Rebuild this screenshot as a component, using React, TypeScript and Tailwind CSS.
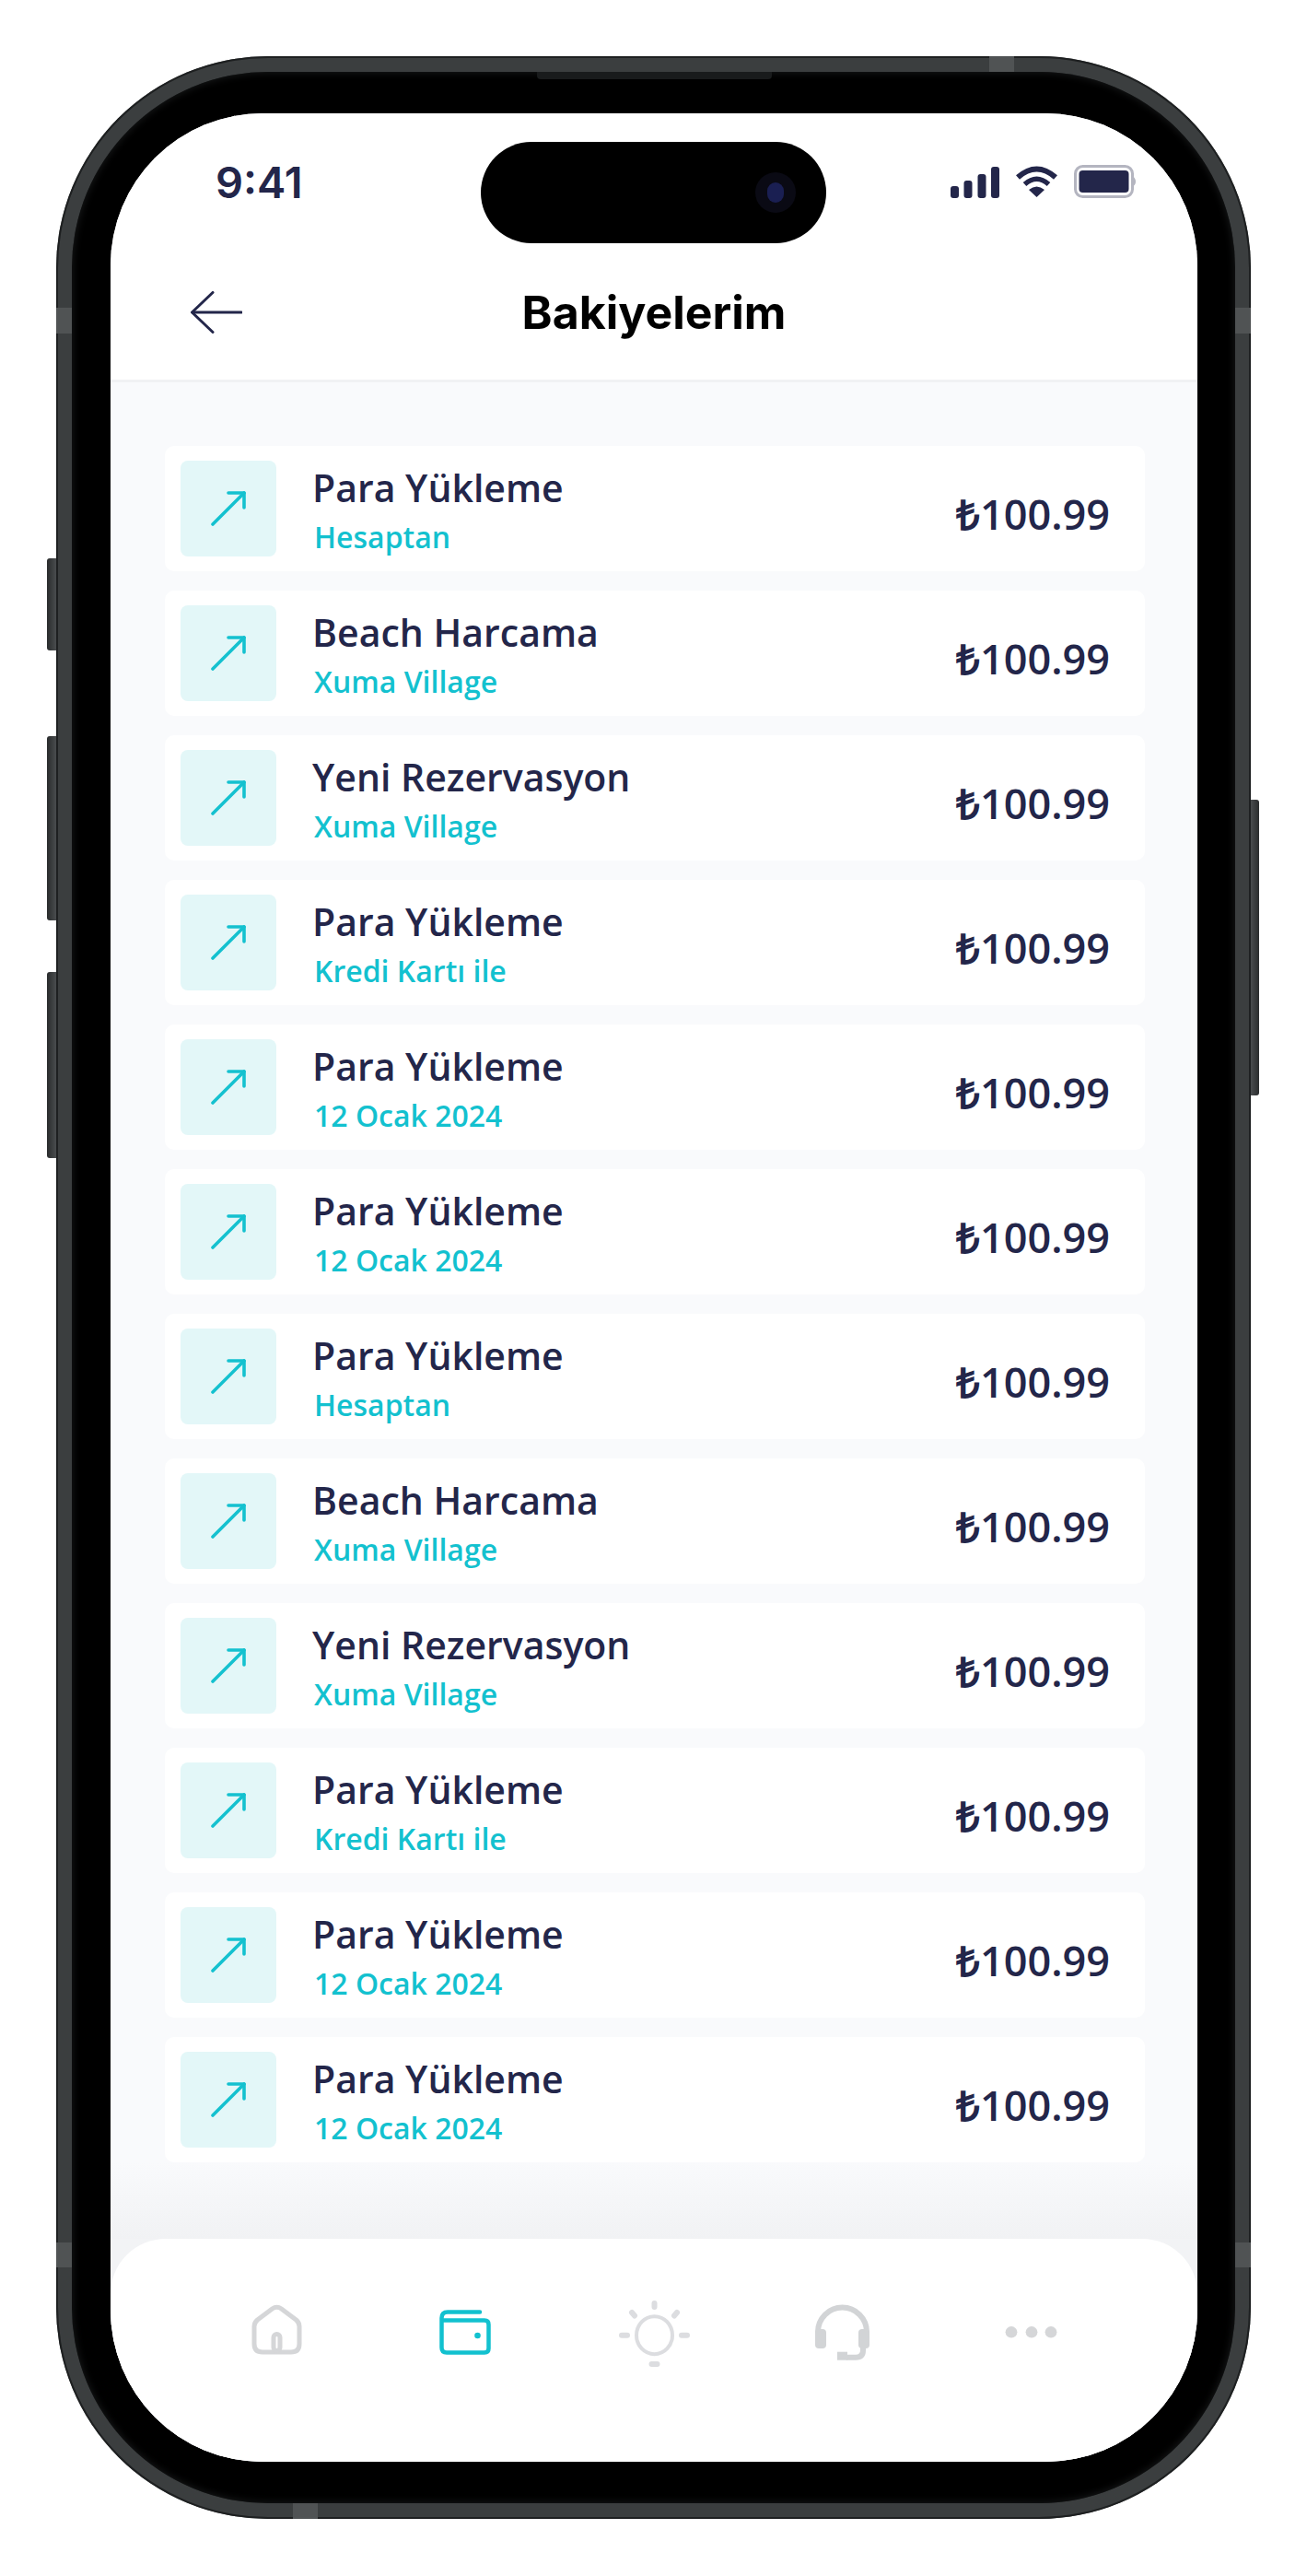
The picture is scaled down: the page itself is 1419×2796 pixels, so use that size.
const rows = [
  { title: "Para Yükleme", sub: "Hesaptan" },
  { title: "Beach Harcama", sub: "Xuma Village" },
  { title: "Yeni Rezervasyon", sub: "Xuma Village" },
  { title: "Para Yükleme", sub: "Kredi Kartı ile" },
  { title: "Para Yükleme", sub: "12 Ocak 2024" },
  { title: "Para Yükleme", sub: "12 Ocak 2024" },
  { title: "Para Yükleme", sub: "Hesaptan" },
  { title: "Beach Harcama", sub: "Xuma Village" },
  { title: "Yeni Rezervasyon", sub: "Xuma Village" },
  { title: "Para Yükleme", sub: "Kredi Kartı ile" },
  { title: "Para Yükleme", sub: "12 Ocak 2024" },
  { title: "Para Yükleme", sub: "12 Ocak 2024" },
];

function StatusIcons() {
  return (
    <div className="flex items-center gap-[17px]">
      <svg width="53" height="35" viewBox="0 0 53 35" fill="#23264a">
        <rect x="0" y="22" width="9" height="13" rx="3" />
        <rect x="14.5" y="16" width="9" height="19" rx="3" />
        <rect x="29.5" y="9" width="9" height="26" rx="3" />
        <rect x="44" y="1" width="9" height="34" rx="3" />
      </svg>
      <svg width="47" height="35" viewBox="0 0 47 35" fill="none" stroke="#23264a">
        <path d="M3 12.5Q23.5 -5.5 44 12.5" strokeWidth="6" />
        <path d="M10.5 20Q23.5 8.5 36.5 20" strokeWidth="5.5" />
        <path d="M23.5 34L15 26Q23.5 19 32 26Z" fill="#23264a" stroke="none" />
      </svg>
      <svg width="67" height="36" viewBox="0 0 67 36" fill="none">
        <rect x="1.5" y="1.5" width="62" height="33" rx="8" stroke="#b4b5c0" strokeWidth="3" />
        <rect x="5.5" y="6" width="54" height="24" rx="4" fill="#23264a" />
        <path d="M63 12Q67 14 67 18T63 24Z" fill="#b4b5c0" />
      </svg>
    </div>
  );
}

function BackArrow() {
  return (
    <svg width="56" height="46" viewBox="0 0 56 46" fill="none" stroke="#23264a" strokeWidth="3" strokeLinecap="round" strokeLinejoin="round">
      <path d="M55 23H2" />
      <path d="M24 1.5L1.5 23L24 44.5" />
    </svg>
  );
}

function UpArrow() {
  return (
    <svg width="104" height="104" viewBox="0 0 104 104" fill="none" stroke="#14c1cf" strokeWidth="3.6" strokeLinecap="round" strokeLinejoin="round">
      <path d="M35 69L69 35" />
      <path d="M52 35H69V51" />
    </svg>
  );
}

function HomeIcon() {
  return (
    <svg width="84" height="84" viewBox="0 0 84 84" fill="none" stroke="#d5d6d8" strokeWidth="5" strokeLinejoin="round">
      <path d="M37.5 12L21.5 24Q18 27 18 31V50Q18 59 27 59H58Q67 59 67 50V31Q67 27 63.5 24L47.5 12Q42.5 8.5 37.5 12Z" />
      <rect x="39" y="39.5" width="7" height="18" rx="3.5" />
    </svg>
  );
}

function WalletIcon() {
  return (
    <svg width="84" height="84" viewBox="0 0 84 84" fill="none" stroke="#12c1cf" strokeWidth="4.5" strokeLinecap="round">
      <path d="M58 15.5H23Q16.5 15.5 16.5 22V54Q16.5 59.5 22 59.5H63Q67.5 59.5 67.5 55V29Q67.5 24.5 63 24.5H16.5" />
      <circle cx="55.5" cy="41" r="3.3" fill="#12c1cf" stroke="none" />
    </svg>
  );
}

function SunIcon() {
  return (
    <svg width="84" height="84" viewBox="0 0 84 84" fill="none" stroke="#dcdde0" strokeLinecap="round">
      <ellipse cx="42.5" cy="40.7" rx="19.5" ry="20.5" strokeWidth="4" />
      <path d="M42.5 6V10M18 16L21 19.5M67 16L64 19.5M7 40.7H13M72 40.7H78M39.5 72H45.5" strokeWidth="6" />
    </svg>
  );
}

function HeadsetIcon() {
  return (
    <svg width="84" height="84" viewBox="0 0 84 84" fill="none" stroke="#d2d4d6" strokeWidth="6">
      <path d="M15 38V37a26.5 26.5 0 0 1 53 0V38" />
      <path d="M64 52V57Q64 64.7 56 64.7H46" />
      <rect x="12" y="34" width="12" height="21" rx="4" fill="#d2d4d6" stroke="none" />
      <rect x="59" y="34" width="12" height="21" rx="4" fill="#d2d4d6" stroke="none" />
      <rect x="36" y="58.7" width="11" height="9" fill="#d2d4d6" stroke="none" />
    </svg>
  );
}

function DotsIcon() {
  return (
    <svg width="84" height="84" viewBox="0 0 84 84" fill="#d5d6d8">
      <ellipse cx="20" cy="37.3" rx="6.4" ry="6.2" />
      <ellipse cx="42" cy="37.3" rx="6.4" ry="6.2" />
      <ellipse cx="63" cy="37.3" rx="6.4" ry="6.2" />
    </svg>
  );
}

export default function App() {
  return (
    <div className="w-[1419px] h-[2796px] bg-white flex justify-center pt-[61px] font-['Open_Sans',sans-serif]">
      <div className="relative w-[1297px] h-[2673px]">
        {/* side buttons */}
        <div className="absolute left-[-10px] top-[545px] w-[11px] h-[100px] rounded-l-[3px] bg-gradient-to-r from-[#2a2c2d] to-[#4d5052]" />
        <div className="absolute left-[-10px] top-[738px] w-[11px] h-[200px] rounded-l-[3px] bg-gradient-to-r from-[#2a2c2d] to-[#4d5052]" />
        <div className="absolute left-[-10px] top-[994px] w-[11px] h-[202px] rounded-l-[3px] bg-gradient-to-r from-[#2a2c2d] to-[#4d5052]" />
        <div className="absolute right-[-9px] top-[807px] w-[10px] h-[321px] rounded-r-[3px] bg-gradient-to-l from-[#2a2c2d] to-[#4d5052]" />

        <div className="relative h-full rounded-[230px] bg-[#3b3e3f] p-[17px] shadow-[inset_0_0_0_2px_#1e2021]">
          {/* antenna bands */}
          <div className="absolute left-0 top-[273px] w-[17px] h-[28px] bg-[#505354]" />
          <div className="absolute right-0 top-[273px] w-[17px] h-[28px] bg-[#505354]" />
          <div className="absolute left-0 top-[2373px] w-[17px] h-[27px] bg-[#505354]" />
          <div className="absolute right-0 top-[2373px] w-[17px] h-[27px] bg-[#505354]" />
          <div className="absolute top-0 left-[1013px] w-[27px] h-[17px] bg-[#505354]" />
          <div className="absolute bottom-0 left-[257px] w-[27px] h-[17px] bg-[#505354]" />

          <div className="relative h-full rounded-[213px] bg-black pl-[42px] pr-[41px] pt-[45px] pb-[45px] shadow-[inset_0_0_10px_#1c1e1f]">
            {/* earpiece */}
            <div className="absolute top-0 left-[505px] w-[255px] h-[8px] rounded-b-[4px] bg-[#191b1c]" />

            <div className="relative h-full flex flex-col overflow-hidden rounded-[165px] bg-[#f3f4f6]">
              {/* dynamic island */}
              <div className="absolute left-[402px] top-[31px] w-[375px] h-[110px] rounded-full bg-black">
                <div className="absolute left-[298px] top-[33px] w-[44px] h-[44px] rounded-full bg-[#0a0a14] flex items-center justify-center">
                  <div className="w-[18px] h-[22px] rounded-full bg-[#1a1f52]" />
                </div>
              </div>

              <div className="bg-white border-b-[3px] border-[#f1f2f4] h-[292px]">
                <div className="flex items-center justify-between h-[148px] pl-[114px] pr-[67px]">
                  <span className="text-[47px] leading-none font-semibold font-['Inter',sans-serif] text-[#23264a]">9:41</span>
                  <StatusIcons />
                </div>
                <div className="relative flex items-center justify-center h-[136px]">
                  <div className="absolute left-[87px] top-[45px]">
                    <BackArrow />
                  </div>
                  <h1 className="text-[50px] leading-none font-bold font-['Inter',sans-serif] text-black">Bakiyelerim</h1>
                </div>
              </div>

              <div className="bg-[#f9fafc] pt-[69px] pl-[59px] pr-[57px] flex flex-col gap-[21px]">
                {rows.map((row, i) => (
                  <div key={i} className="flex items-center h-[136px] rounded-[10px] bg-white pl-[17px] pr-[38px]">
                    <div className="w-[104px] h-[104px] rounded-[8px] bg-[#e3f7f8] shrink-0">
                      <UpArrow />
                    </div>
                    <div className="flex-1 ml-[39px] mt-[3px]">
                      <div className="text-[41px] leading-[48px] font-semibold text-[#23264a]">{row.title}</div>
                      <div className="text-[32px] leading-[40px] mt-[10px] ml-[2px] font-semibold text-[#13c1cf]">{row.sub}</div>
                    </div>
                    <div className="text-[45px] leading-none font-semibold mt-[10px] text-[#23264a]">₺100.99</div>
                  </div>
                ))}
              </div>
              <div className="flex-1 bg-gradient-to-b from-[#f9fafc] to-[#f1f2f4]" />

              {/* tab bar */}
              <div className="bg-[#f2f3f5]">
                <div className="grid grid-cols-5 px-[77px] h-[242px] pb-[30px] rounded-t-[60px] bg-white">
                  <div className="flex items-center justify-center"><HomeIcon /></div>
                  <div className="flex items-center justify-center"><WalletIcon /></div>
                  <div className="flex items-center justify-center"><SunIcon /></div>
                  <div className="flex items-center justify-center"><HeadsetIcon /></div>
                  <div className="flex items-center justify-center"><DotsIcon /></div>
                </div>
              </div>
            </div>
          </div>
        </div>
      </div>
    </div>
  );
}
